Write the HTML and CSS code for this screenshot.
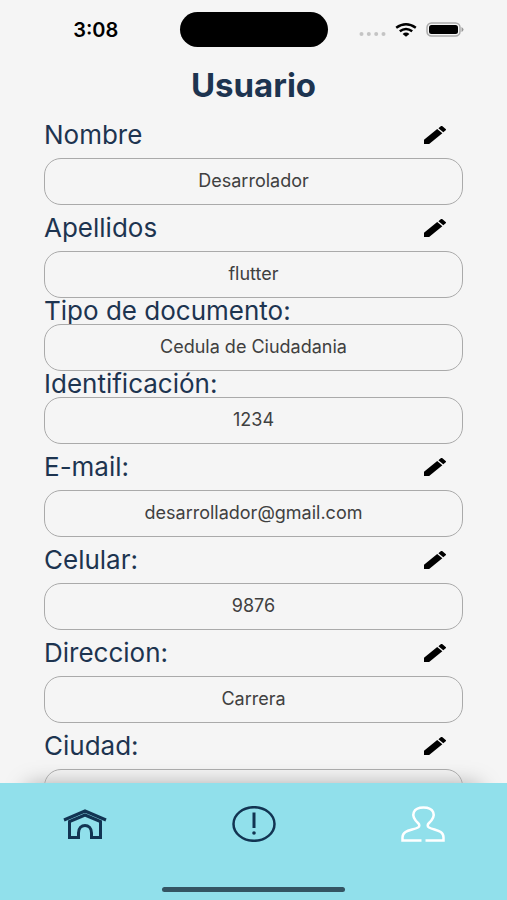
FILE: index.html
```html
<!DOCTYPE html>
<html lang="es">
<head>
<meta charset="utf-8">
<meta name="viewport" content="width=device-width, initial-scale=1">
<title>Usuario</title>
<link rel="stylesheet" href="styles.css">
</head>
<body>
<svg class="defs" aria-hidden="true">
  <symbol id="pencil" viewBox="3 3 18 18" preserveAspectRatio="none">
    <path d="M3 16.800V21h4.200L18 10.200l-4.200-4.200L3 16.800zM20.71 7.300a1 1 0 0 0 0-1.41l-2.600-2.600a1 1 0 0 0-1.41 0l-1.900 1.900 4 4 1.900-1.900z"/>
  </symbol>
</svg>
<div class="screen">
  <header class="status">
    <time class="time">3:08</time>
    <span class="island"></span>
    <div class="signals">
      <svg class="dots" viewBox="0 0 27 4" aria-hidden="true"><circle cx="2.5" cy="2" r="2"/><circle cx="9.8" cy="2" r="2"/><circle cx="17.2" cy="2" r="2"/><circle cx="24.5" cy="2" r="2"/></svg>
      <svg class="wifi" viewBox="0 0 22 14" aria-hidden="true">
        <path d="M1.2 4.8Q11-2.200 20.8 4.8M4.8 8.300Q11 3.600 17.2 8.300"/>
        <path class="solid" d="M7.6 10.9Q11 8 14.4 10.9L11 13.8z"/>
      </svg>
      <svg class="battery" viewBox="0 0 38 15" aria-hidden="true">
        <rect class="shell" x="1" y="1" width="33" height="13" rx="4.5"/>
        <rect x="3" y="3" width="29" height="9" rx="2.5"/>
        <path class="cap" d="M35.5 5q2 1 2 2.500t-2 2.500z"/>
      </svg>
    </div>
  </header>
  <main class="content">
    <h1 class="title">Usuario</h1>
    <form class="form">
      <div class="row"><label for="nombre">Nombre</label><button class="edit" type="button" aria-label="Editar nombre"><svg><use href="#pencil"/></svg></button></div>
      <input class="field" id="nombre" value="Desarrolador" readonly>
      <div class="row"><label for="apellidos">Apellidos</label><button class="edit" type="button" aria-label="Editar apellidos"><svg><use href="#pencil"/></svg></button></div>
      <input class="field" id="apellidos" value="flutter" readonly>
      <div class="row fixed"><label for="tipo">Tipo de documento:</label></div>
      <input class="field" id="tipo" value="Cedula de Ciudadania" readonly>
      <div class="row fixed"><label for="identificacion">Identificación:</label></div>
      <input class="field" id="identificacion" value="1234" readonly>
      <div class="row"><label for="email">E-mail:</label><button class="edit" type="button" aria-label="Editar e-mail"><svg><use href="#pencil"/></svg></button></div>
      <input class="field" id="email" value="desarrollador@gmail.com" readonly>
      <div class="row"><label for="celular">Celular:</label><button class="edit" type="button" aria-label="Editar celular"><svg><use href="#pencil"/></svg></button></div>
      <input class="field" id="celular" value="9876" readonly>
      <div class="row"><label for="direccion">Direccion:</label><button class="edit" type="button" aria-label="Editar direccion"><svg><use href="#pencil"/></svg></button></div>
      <input class="field" id="direccion" value="Carrera" readonly>
      <div class="row"><label for="ciudad">Ciudad:</label><button class="edit" type="button" aria-label="Editar ciudad"><svg><use href="#pencil"/></svg></button></div>
      <input class="field" id="ciudad" readonly>
    </form>
  </main>
  <nav class="tabs">
    <div class="links">
      <a href="#inicio" aria-label="Inicio">
        <svg class="house" viewBox="0 0 44 36"><path d="M1 14 22 5l21 9M6.500 15.500V31.500h9V27c0-10 13-10 13 0v4.500h9V15.500L22 9z"/></svg>
      </a>
      <a href="#avisos" aria-label="Avisos">
        <svg viewBox="0 0 44 36"><ellipse cx="22" cy="18" rx="20.500" ry="16.800"/><path class="bar" d="M22 6.500V22"/><circle class="dot" cx="22" cy="27" r="1.800"/></svg>
      </a>
      <a class="active" href="#usuario" aria-label="Usuario">
        <svg viewBox="0 0 44 36"><path d="M20.500 34.500H1.500V31.500C1.500 24 11 24.500 17 21.500c2-1 1.500-3 0-4.500C8.500 9 12.500 1.500 22.500 1.500S36.500 9 28 17c-1.500 1.500-2 3.500 0 4.500 6 3 14.500 2.500 14.500 10v3H24.500"/></svg>
      </a>
    </div>
    <span class="home-bar"></span>
  </nav>
</div>
</body>
</html>
```
FILE: styles.css
```css
* {
  box-sizing: border-box;
}

body {
  margin: 0;
  background: #f5f5f5;
  color: #1d3450;
  font-family: Inter, "Liberation Sans", sans-serif;
}

.defs {
  position: absolute;
  width: 0;
  height: 0;
}

.screen {
  display: flex;
  flex-direction: column;
  height: 100vh;
  overflow: hidden;
}

.status {
  display: grid;
  grid-template-columns: 1fr auto 1fr;
  align-items: center;
  flex: none;
  padding: 12px 0 11px;
}

.time {
  padding-left: 12px;
  color: #000;
  font-size: 20px;
  font-weight: 600;
  text-align: center;
}

.island {
  width: 148px;
  height: 35px;
  border-radius: 18px;
  background: #000;
}

.signals {
  display: flex;
  align-items: center;
  justify-content: center;
  gap: 9px;
  padding-right: 12px;
}

.dots {
  width: 27px;
  height: 4px;
  margin-top: 9px;
  fill: #c4c4c4;
}

.wifi {
  width: 22px;
  height: 14px;
  fill: none;
  stroke: #000;
  stroke-width: 2.500;
}

.wifi .solid {
  fill: #000;
  stroke: none;
}

.battery {
  width: 38px;
  height: 15px;
}

.battery .shell {
  fill: none;
  stroke: #aaa;
  stroke-width: 1.500;
}

.battery .cap {
  fill: #999;
}

.content {
  flex: 1;
  min-height: 0;
  padding: 0 44px;
  overflow: hidden;
}

.title {
  margin: 0;
  font-size: 33px;
  font-weight: 700;
  line-height: 54px;
  text-align: center;
}

.form {
  display: flex;
  flex-direction: column;
}

.row {
  display: flex;
  align-items: center;
  justify-content: space-between;
  height: 46px;
  font-size: 26px;
  line-height: 26px;
}

.row.fixed {
  height: 26px;
}

.edit {
  display: grid;
  place-items: center;
  width: 56px;
  height: 46px;
  padding: 0;
  border: 0;
  background: none;
}

.edit svg {
  width: 22px;
  height: 18px;
}

.field {
  width: 100%;
  height: 47px;
  padding: 0 16px 2px;
  border: 1px solid #aaa;
  border-radius: 17px;
  background: transparent;
  color: #404040;
  font: 18px Inter, "Liberation Sans", sans-serif;
  text-align: center;
  outline: 0;
}

.tabs {
  position: relative;
  display: flex;
  flex: none;
  flex-direction: column;
  align-items: center;
  padding-bottom: 8px;
  background: #91e0eb;
}

.tabs::before {
  content: "";
  position: absolute;
  inset: 4px 28px 0;
  z-index: -1;
  box-shadow: 0 0 22px rgb(0 0 0 / 40%);
}

.links {
  display: grid;
  grid-template-columns: repeat(3, 1fr);
  width: 100%;
  height: 104px;
}

.links a {
  display: flex;
  justify-content: center;
  padding-top: 23px;
  color: #123452;
}

.links .active {
  color: #fff;
}

.links svg {
  width: 44px;
  height: 36px;
  fill: none;
  stroke: currentColor;
  stroke-width: 2.500;
}

.links .house {
  stroke-width: 3;
}

.links .bar {
  stroke-width: 3;
}

.links .dot {
  fill: currentColor;
  stroke: none;
}

.home-bar {
  width: 36%;
  height: 5px;
  border-radius: 3px;
  background: #345563;
}
```
